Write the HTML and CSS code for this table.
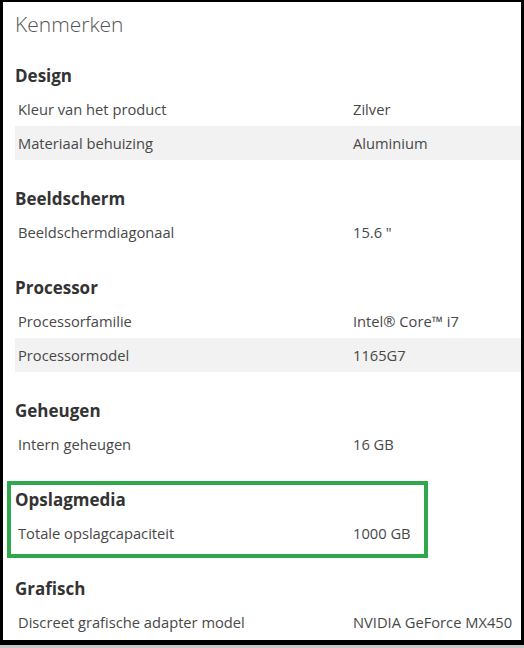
FILE: index.html
```html
<!DOCTYPE html>
<html lang="nl">
<head>
<meta charset="utf-8">
<link rel="stylesheet" href="styles.css">
</head>
<body>
<div class="frame">
  <h1 class="title">Kenmerken</h1>

  <section class="group">
    <h2 class="group-title">Design</h2>
    <div class="row"><span class="label">Kleur van het product</span><span class="value">Zilver</span></div>
    <div class="row alt"><span class="label">Materiaal behuizing</span><span class="value">Aluminium</span></div>
  </section>

  <section class="group">
    <h2 class="group-title">Beeldscherm</h2>
    <div class="row"><span class="label">Beeldschermdiagonaal</span><span class="value">15.6 "</span></div>
  </section>

  <section class="group">
    <h2 class="group-title">Processor</h2>
    <div class="row"><span class="label">Processorfamilie</span><span class="value">Intel® Core™ i7</span></div>
    <div class="row alt"><span class="label">Processormodel</span><span class="value">1165G7</span></div>
  </section>

  <section class="group">
    <h2 class="group-title">Geheugen</h2>
    <div class="row"><span class="label">Intern geheugen</span><span class="value">16 GB</span></div>
  </section>

  <section class="group highlight">
    <h2 class="group-title">Opslagmedia</h2>
    <div class="row"><span class="label">Totale opslagcapaciteit</span><span class="value">1000 GB</span></div>
  </section>

  <section class="group">
    <h2 class="group-title">Grafisch</h2>
    <div class="row"><span class="label">Discreet grafische adapter model</span><span class="value">NVIDIA GeForce MX450</span></div>
  </section>
</div>
</body>
</html>
```

FILE: styles.css
```css
html, body {
  margin: 0;
  padding: 0;
}
body {
  background: #c8c8c8;
  font-family: "Open Sans", "Noto Sans", sans-serif;
  color: #444;
}
.frame {
  box-sizing: border-box;
  height: 645px;
  background: #fff;
  border-style: solid;
  border-color: #000;
  border-width: 2px 3px 5px 3px;
  padding: 0 0 0 12px;
  overflow: hidden;
}
.title {
  margin: 0;
  padding-top: 7px;
  font-size: 21px;
  line-height: 30px;
  font-weight: 300;
  color: #555;
}
.group {
  margin-top: 23px;
  position: relative;
}
.title + .group {
  margin-top: 21px;
}
.group-title {
  margin: 0;
  font-size: 17px;
  line-height: 32px;
  font-weight: 700;
  color: #333;
}
.row {
  display: grid;
  grid-template-columns: 338px 1fr;
  height: 34px;
  align-items: center;
  font-size: 14.7px;
  color: #484848;
}
.row .label {
  padding-left: 3px;
}
.row.alt {
  background: #f2f2f2;
}
.highlight::after {
  content: "";
  position: absolute;
  left: -8px;
  top: -3px;
  width: 421px;
  height: 77px;
  box-sizing: border-box;
  border: 4px solid #2ea84a;
  pointer-events: none;
}
```
